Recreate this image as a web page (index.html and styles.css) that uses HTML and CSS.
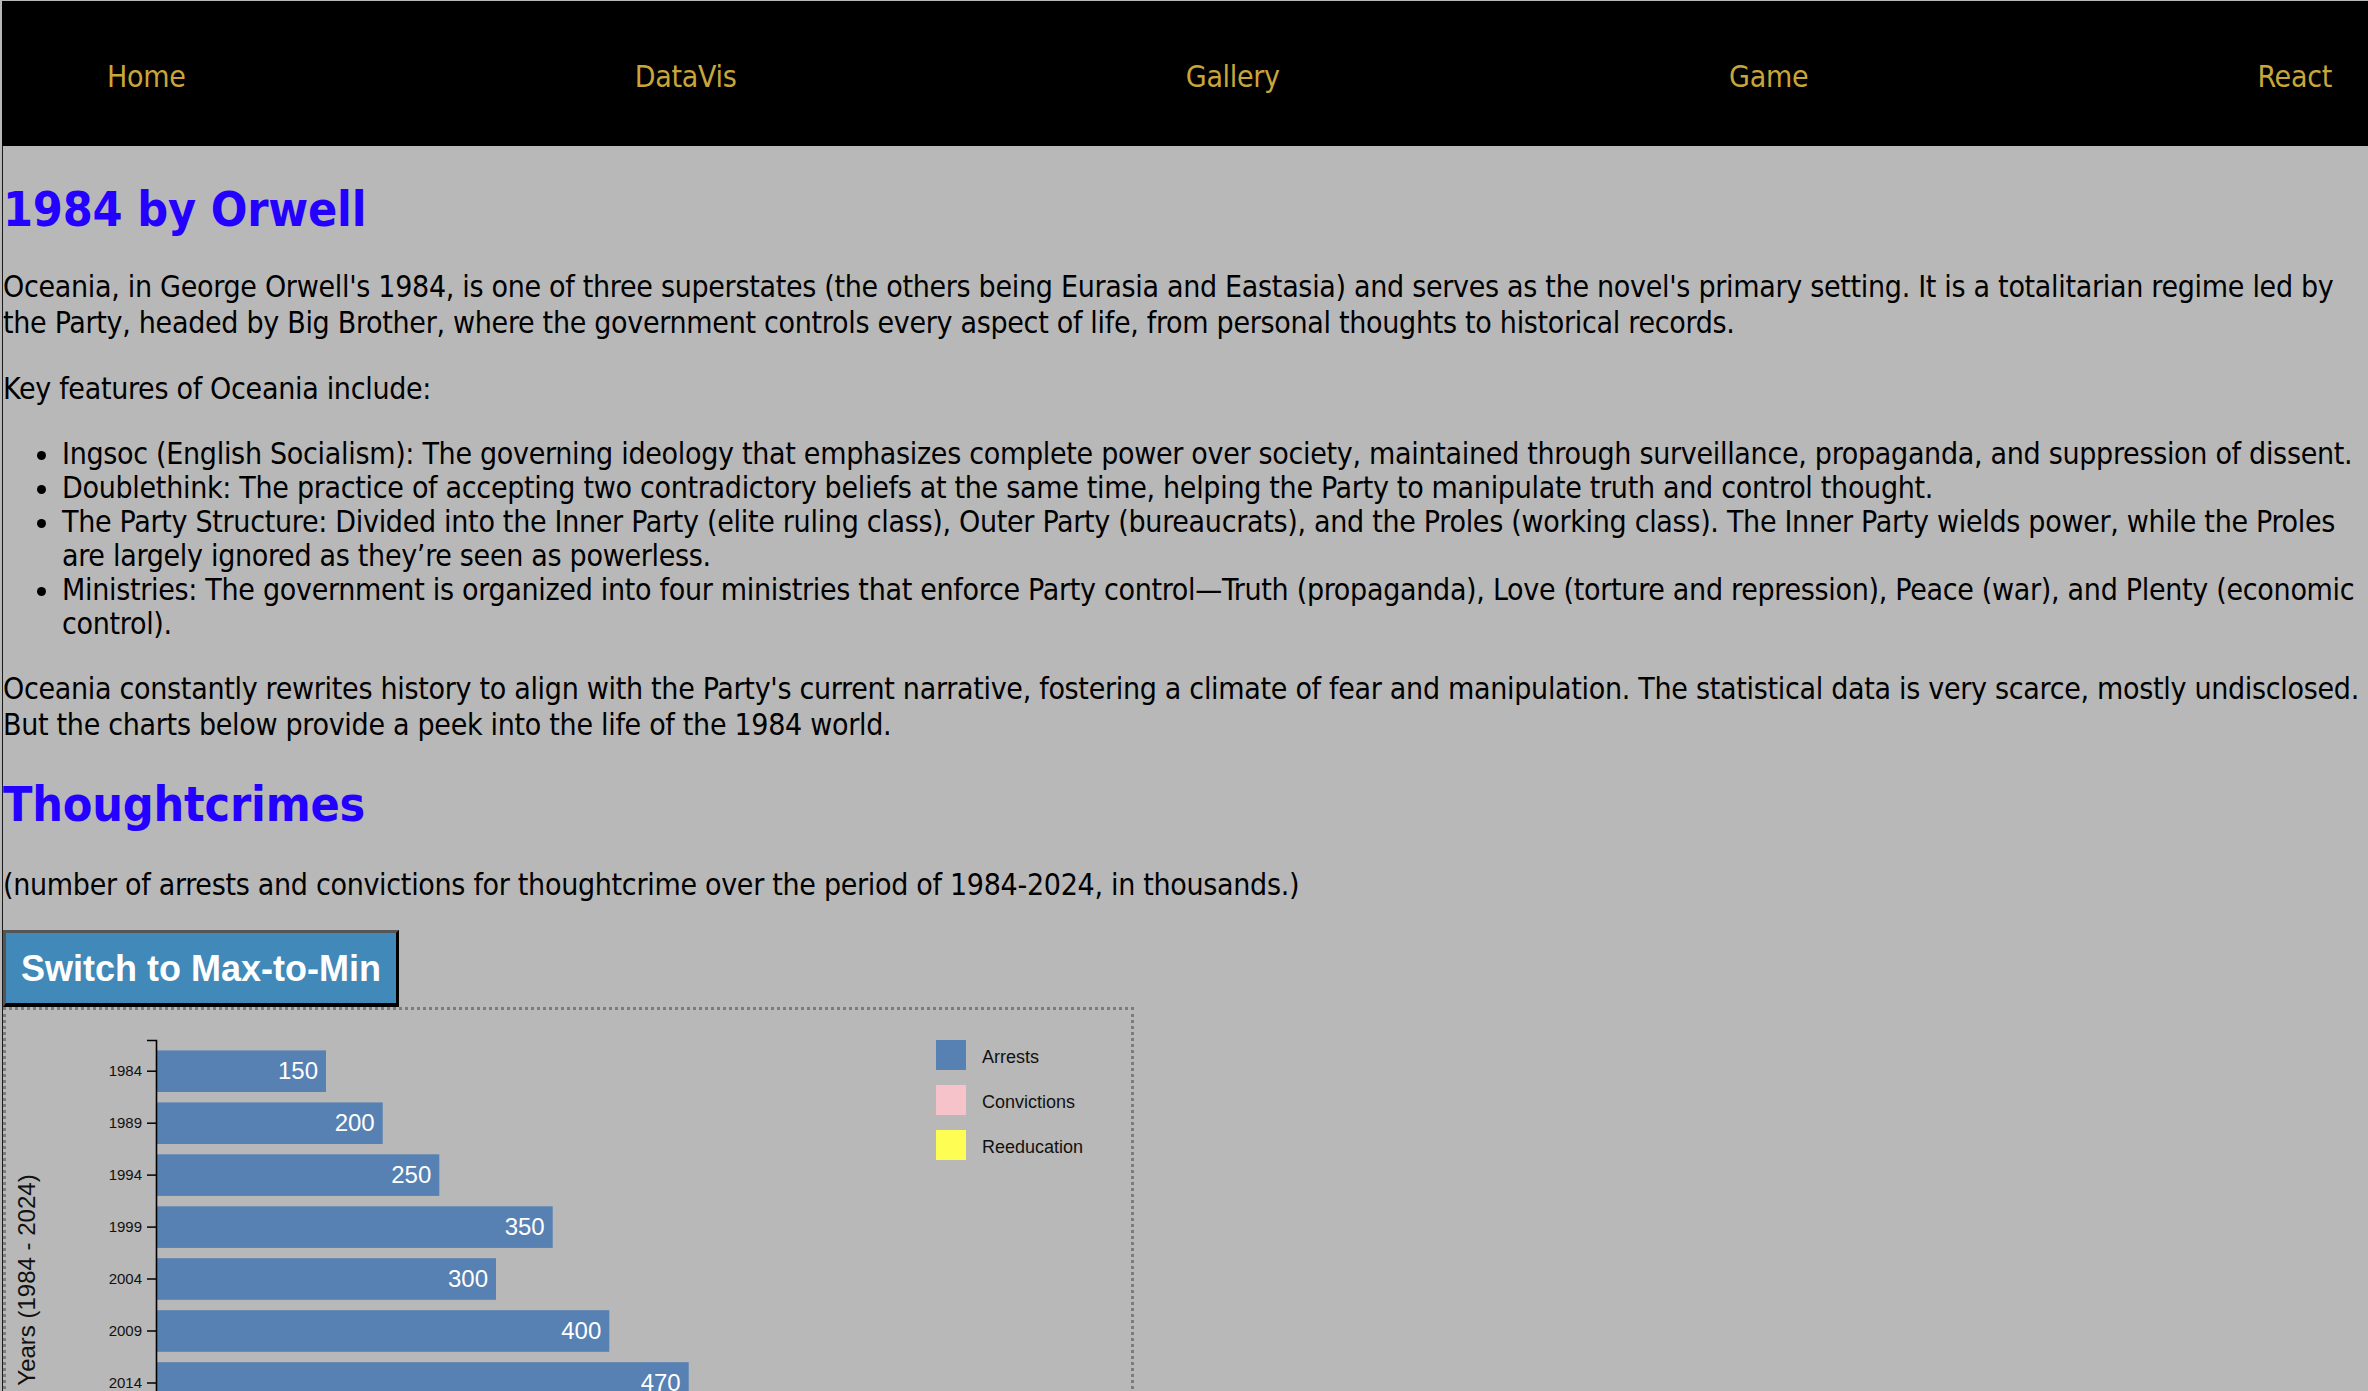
FILE: index.html
```html
<!DOCTYPE html>
<html lang="en">
<head>
<meta charset="utf-8">
<title>1984 by Orwell</title>
<link rel="stylesheet" href="styles.css">
</head>
<body>
<nav class="topnav">
  <ul class="nav-list">
    <li><a class="nav-link" href="#">Home</a></li>
    <li><a class="nav-link" href="#">DataVis</a></li>
    <li><a class="nav-link" href="#">Gallery</a></li>
    <li><a class="nav-link" href="#">Game</a></li>
    <li><a class="nav-link" href="#">React</a></li>
  </ul>
</nav>
<main class="content">
  <h1 class="title">1984 by Orwell</h1>
  <p class="text">Oceania, in George Orwell's 1984, is one of three superstates (the others being Eurasia and Eastasia) and serves as the novel's primary setting. It is a totalitarian regime led by the Party, headed by Big Brother, where the government controls every aspect of life, from personal thoughts to historical records.</p>
  <p class="text">Key features of Oceania include:</p>
  <ul class="features">
    <li>Ingsoc (English Socialism): The governing ideology that emphasizes complete power over society, maintained through surveillance, propaganda, and suppression of dissent.</li>
    <li>Doublethink: The practice of accepting two contradictory beliefs at the same time, helping the Party to manipulate truth and control thought.</li>
    <li>The Party Structure: Divided into the Inner Party (elite ruling class), Outer Party (bureaucrats), and the Proles (working class). The Inner Party wields power, while the Proles are largely ignored as they’re seen as powerless.</li>
    <li>Ministries: The government is organized into four ministries that enforce Party control—Truth (propaganda), Love (torture and repression), Peace (war), and Plenty (economic control).</li>
  </ul>
  <p class="text">Oceania constantly rewrites history to align with the Party's current narrative, fostering a climate of fear and manipulation. The statistical data is very scarce, mostly undisclosed. But the charts below provide a peek into the life of the 1984 world.</p>
  <h2 class="section-title">Thoughtcrimes</h2>
  <p class="text caption">(number of arrests and convictions for thoughtcrime over the period of 1984-2024, in thousands.)</p>
  <button class="switch-btn" type="button">Switch to Max-to-Min</button>
  <div class="chart-box">
    <svg class="chart" width="1125" height="580" viewBox="0 0 1125 580" xmlns="http://www.w3.org/2000/svg">
      <g class="bars" fill="#5681b2">
        <rect x="150" y="40.4" width="170" height="41.6"/>
        <rect x="150" y="92.4" width="226.7" height="41.6"/>
        <rect x="150" y="144.3" width="283.3" height="41.6"/>
        <rect x="150" y="196.3" width="396.7" height="41.6"/>
        <rect x="150" y="248.2" width="340" height="41.6"/>
        <rect x="150" y="300.2" width="453.3" height="41.6"/>
        <rect x="150" y="352.2" width="532.7" height="41.6"/>
        <rect x="150" y="404.1" width="623.3" height="41.6"/>
        <rect x="150" y="456.1" width="680" height="41.6"/>
      </g>
      <g class="bar-labels" fill="#ffffff" font-family="Liberation Sans, Arial, sans-serif" font-size="24" text-anchor="end">
        <text x="312" y="69.4">150</text>
        <text x="368.7" y="121.4">200</text>
        <text x="425.3" y="173.3">250</text>
        <text x="538.7" y="225.3">350</text>
        <text x="482" y="277.2">300</text>
        <text x="595.3" y="329.2">400</text>
        <text x="674.7" y="381.2">470</text>
        <text x="765.3" y="433.1">550</text>
        <text x="822" y="485.1">600</text>
      </g>
      <g class="y-axis" font-family="Liberation Sans, Arial, sans-serif" font-size="15" fill="#111" text-anchor="end">
        <path d="M141,30.5H150.5V507.5H141" fill="none" stroke="#000" stroke-width="1.6"/>
        <g stroke="#000" stroke-width="1.5">
          <line x1="141" x2="150" y1="61.2" y2="61.2"/>
          <line x1="141" x2="150" y1="113.2" y2="113.2"/>
          <line x1="141" x2="150" y1="165.1" y2="165.1"/>
          <line x1="141" x2="150" y1="217.1" y2="217.1"/>
          <line x1="141" x2="150" y1="269" y2="269"/>
          <line x1="141" x2="150" y1="321" y2="321"/>
          <line x1="141" x2="150" y1="373" y2="373"/>
          <line x1="141" x2="150" y1="424.9" y2="424.9"/>
          <line x1="141" x2="150" y1="476.9" y2="476.9"/>
        </g>
        <text x="136" y="66.2">1984</text>
        <text x="136" y="118.2">1989</text>
        <text x="136" y="170.1">1994</text>
        <text x="136" y="222.1">1999</text>
        <text x="136" y="274">2004</text>
        <text x="136" y="326">2009</text>
        <text x="136" y="378">2014</text>
        <text x="136" y="429.9">2019</text>
        <text x="136" y="481.9">2024</text>
      </g>
      <g class="x-axis" font-family="Liberation Sans, Arial, sans-serif" font-size="15" fill="#111" text-anchor="middle">
        <path d="M150,517V508H975V517" fill="none" stroke="#000" stroke-width="1.5"/>
        <text x="150" y="536">0</text>
        <text x="376.7" y="536">200</text>
        <text x="603.3" y="536">400</text>
        <text x="830" y="536">600</text>
      </g>
      <text class="axis-title" transform="rotate(-90)" x="-270" y="29" text-anchor="middle" font-family="Liberation Sans, Arial, sans-serif" font-size="24" fill="#111">Years (1984 - 2024)</text>
      <g class="legend" font-family="Liberation Sans, Arial, sans-serif" font-size="18" fill="#111">
        <rect x="930" y="30" width="30" height="30" fill="#5681b2"/>
        <text x="976" y="53">Arrests</text>
        <rect x="930" y="75" width="30" height="30" fill="#f7c3ca"/>
        <text x="976" y="98">Convictions</text>
        <rect x="930" y="120" width="30" height="30" fill="#fdfd54"/>
        <text x="976" y="143">Reeducation</text>
      </g>
    </svg>
  </div>
</main>
</body>
</html>
```

FILE: styles.css
```css
html, body {
  margin: 0;
  background: #b8b8b8;
}

body {
  padding: 1px 0 0 2px;
  font-family: "DejaVu Sans Condensed", "DejaVu Sans", sans-serif;
  font-size: 30px;
  color: #000;
}

.topnav {
  background: #000;
  height: 145px;
  display: flex;
  align-items: center;
}

.nav-list {
  list-style: none;
  margin: 0;
  padding: 5px 36px 0 105px;
  width: 100%;
  box-sizing: border-box;
  display: flex;
  justify-content: space-between;
  align-items: center;
}

.nav-link {
  color: #c9a63a;
  text-decoration: none;
  font-size: 30px;
  letter-spacing: -0.3px;
}

.content {
  border-left: 1px solid #1a1a1a;
  display: flow-root;
}

.title,
.section-title {
  color: #2400ff;
  font-size: 48px;
  font-weight: bold;
  line-height: 58px;
  letter-spacing: -0.2px;
}

.title {
  margin: 34px 0 31px;
}

.section-title {
  margin: 32px 0 28px;
}

.text {
  margin: 30px 0;
  line-height: 36px;
  letter-spacing: -0.3px;
}

.caption {
  margin: 34px 0 27px;
}

.features {
  margin: 30px 0;
  padding-left: 59px;
  line-height: 34px;
  letter-spacing: -0.3px;
}

.switch-btn {
  display: block;
  margin: 0;
  padding: 15px 15px 14px;
  background: #4189b8;
  color: #fff;
  font-family: "Liberation Sans", Arial, sans-serif;
  font-weight: bold;
  font-size: 36px;
  line-height: 41px;
  border-style: solid;
  border-width: 3px 3px 4px 3px;
  border-color: #555 #000 #000 #555;
  border-radius: 0;
}

.chart-box {
  border: 3px dotted #7c7c7c;
  width: fit-content;
}

.chart {
  display: block;
}
```
